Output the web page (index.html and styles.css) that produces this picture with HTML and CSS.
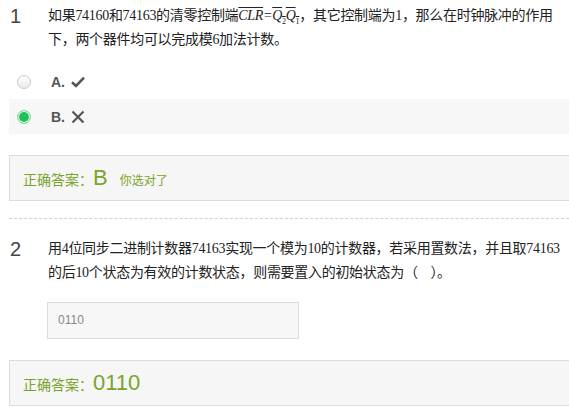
FILE: index.html
```html
<!DOCTYPE html>
<html lang="zh-CN">
<head>
    <meta charset="UTF-8">
    <title>练习</title>
    <link rel="stylesheet" href="styles.css">
</head>
<body>
    <div class="question">
        <div class="q-head">
            <span class="q-num">1</span>
            <div class="q-text">如果74160和74163的清零控制端<span class="math"><span class="bar">CLR</span>=<span class="bar">Q<sub>2</sub></span><span class="bar">Q<sub>1</sub></span></span>，其它控制端为1，那么在时钟脉冲的作用<br>下，两个器件均可以完成模6加法计数。</div>
        </div>

        <div class="options">
            <div class="option">
                <span class="radio"></span>
                <span class="opt-label">A.</span>
                <svg class="icon" width="14" height="12" viewBox="0 0 14 12">
                    <path d="M1 6.2 L5 10 L13 1.6" fill="none" stroke="#555" stroke-width="2.6" stroke-linejoin="miter"/>
                </svg>
            </div>
            <div class="option checked">
                <span class="radio"></span>
                <span class="opt-label">B.</span>
                <svg class="icon" width="14" height="14" viewBox="0 0 14 14">
                    <path d="M1.5 1.5 L12.5 12.5 M12.5 1.5 L1.5 12.5" fill="none" stroke="#555" stroke-width="2.2"/>
                </svg>
            </div>
        </div>

        <div class="answer">
            <span class="ans-title">正确答案：</span><span class="ans-value">B</span><span class="ans-note">你选对了</span>
        </div>
    </div>

    <div class="divider"></div>

    <div class="question">
        <div class="q-head">
            <span class="q-num">2</span>
            <div class="q-text">用4位同步二进制计数器74163实现一个模为10的计数器，若采用置数法，并且取74163<br>的后10个状态为有效的计数状态，则需要置入的初始状态为（&nbsp;&nbsp;&nbsp;&nbsp;）。</div>
        </div>

        <div class="fill">0110</div>

        <div class="answer">
            <span class="ans-title">正确答案：</span><span class="ans-value">0110</span>
        </div>
    </div>
</body>
</html>
```

FILE: styles.css
```css
:root {
    --green: #7aa32a;
    --box-bg: #f6f6f6;
    --box-line: #dcdcdc;
}

body {
    margin: 0;
    overflow: hidden;
    font-family: 'Liberation Sans', 'Noto Sans CJK SC', sans-serif;
    color: #333;
    background: #fff;
}

.question {
    padding-left: 9px;
}

/* 题干 */
.q-head {
    display: flex;
    padding-top: 4px;
}

.q-num {
    flex: none;
    width: 38px;
    padding-left: 1px;
    font-size: 20px;
    line-height: 24px;
    color: #444;
}

.q-text {
    white-space: nowrap;
    letter-spacing: -0.3px;
    font-family: 'Liberation Serif', 'Noto Sans CJK SC', serif;
    font-size: 14px;
    line-height: 24px;
    color: #222;
}

.math {
    font-style: italic;
}

.bar {
    text-decoration: overline;
}

.math sub {
    font-size: 8px;
    font-style: normal;
    line-height: 0;
}

/* 选项 */
.options {
    margin-top: 12px;
}

.option {
    display: flex;
    align-items: center;
    height: 35px;
    padding-left: 8px;
}

.option.checked {
    background: #f7f7f7;
}

.radio {
    width: 12px;
    height: 12px;
    border: 1px solid #c8c8c8;
    border-radius: 50%;
    background: linear-gradient(#fff, #e9e9e9);
}

.option.checked .radio {
    border-color: #8fdca8;
    background: #1ec25a;
    box-shadow: inset 0 0 0 1px #fff;
}

.opt-label {
    margin-left: 20px;
    font-size: 14px;
    font-weight: bold;
    color: #555;
}

.icon {
    margin-left: 6px;
}

/* 答案 */
.answer {
    display: flex;
    align-items: baseline;
    height: 44px;
    line-height: 44px;
    margin-top: 21px;
    margin-right: -10px;
    padding-left: 13px;
    background: var(--box-bg);
    border: 1px solid var(--box-line);
    color: var(--green);
}

.ans-title {
    font-size: 14px;
}

.ans-value {
    font-size: 22px;
}

.ans-note {
    margin-left: 12px;
    font-size: 12px;
}

.divider {
    margin: 17px 0 14px 9px;
    border-top: 1px dashed #d0d0d0;
}

/* 填空 */
.fill {
    width: 240px;
    height: 35px;
    line-height: 35px;
    margin: 17px 0 0 38px;
    padding-left: 10px;
    background: #f7f7f7;
    border: 1px solid var(--box-line);
    font-size: 12px;
    color: #888;
}
```
